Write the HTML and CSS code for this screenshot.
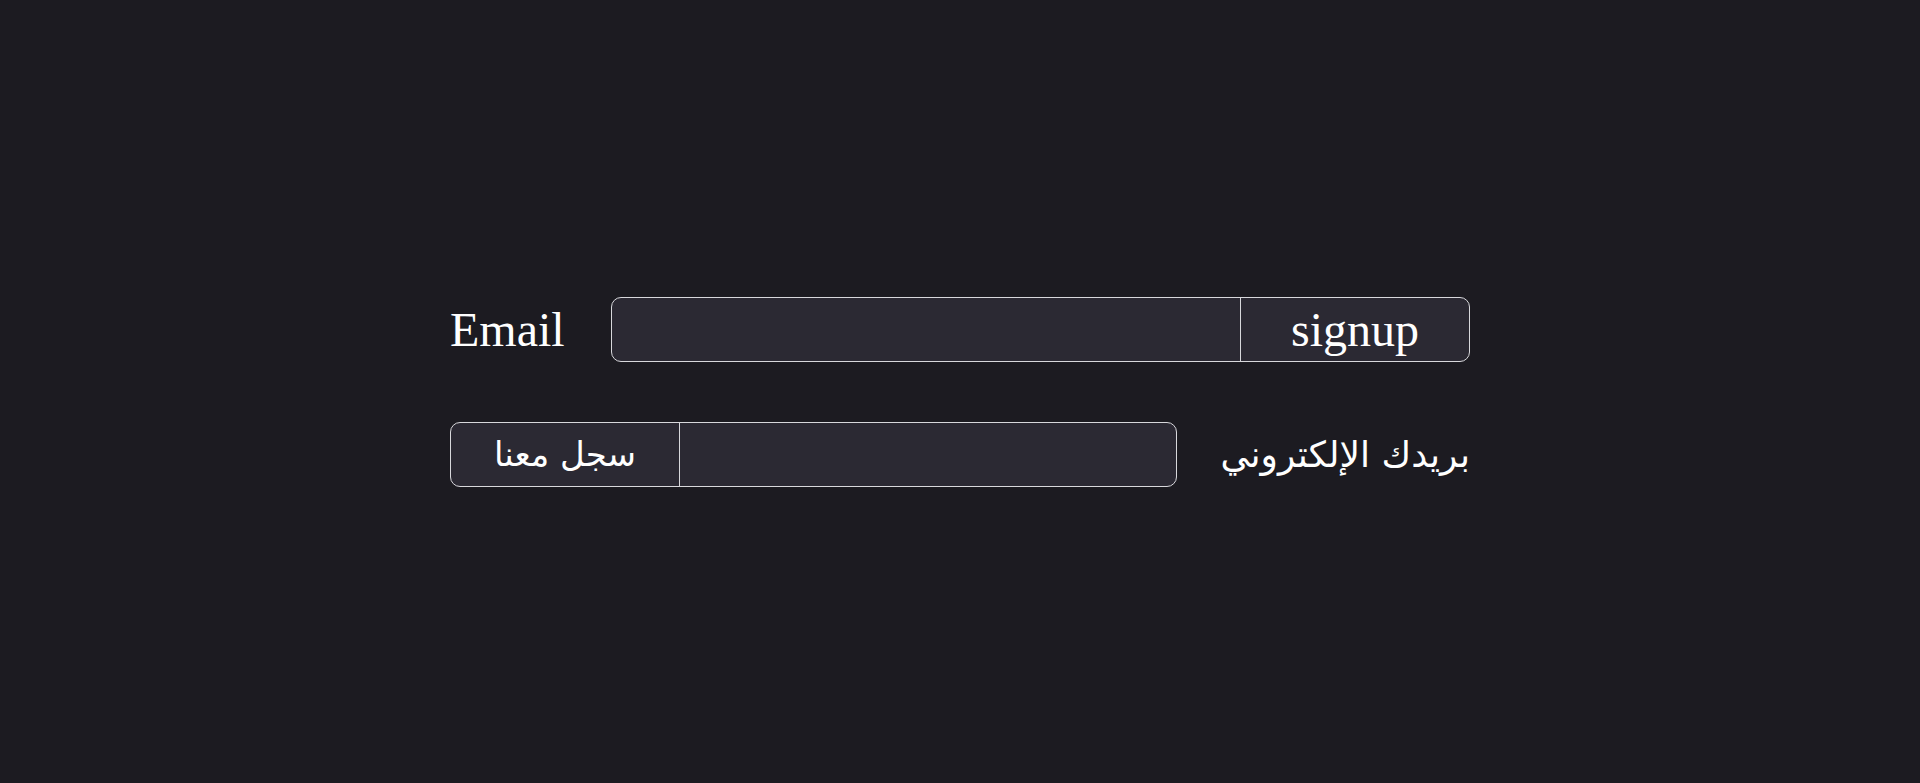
FILE: index.html
```html
<!DOCTYPE html>
<html lang="en">
<head>
<meta charset="utf-8">
<title>Signup</title>
<link rel="stylesheet" href="styles.css">
</head>
<body>
<main class="page">
  <form class="row" dir="ltr">
    <label class="label" for="e1">Email</label>
    <div class="group">
      <input class="field" id="e1" type="email">
      <button class="btn" type="button">signup</button>
    </div>
  </form>
  <form class="row row-ar" dir="rtl" lang="ar">
    <label class="label" for="e2">بريدك الإلكتروني</label>
    <div class="group">
      <input class="field" id="e2" type="email">
      <button class="btn" type="button">سجل معنا</button>
    </div>
  </form>
</main>
</body>
</html>
```
FILE: styles.css
```css
html, body {
  margin: 0;
  padding: 0;
  height: 100%;
  background: #1c1b21;
}
body {
  font-family: "P052", "Palatino Linotype", "Book Antiqua", "URW Palladio L", "Liberation Serif", "DejaVu Sans", serif;
  color: #ffffff;
}
.page {
  height: 100%;
  display: flex;
  flex-direction: column;
  justify-content: center;
  align-items: center;
  gap: 60px;
}
.row {
  width: 1020px;
  display: flex;
  align-items: center;
  gap: 46px;
  margin: 0;
}
.label {
  font-size: 48px;
  white-space: nowrap;
}
.group {
  flex: 1;
  display: flex;
  height: 65px;
  box-sizing: border-box;
  border: 1px solid #d8d8dc;
  border-radius: 10px;
  background: #2b2933;
  overflow: hidden;
}
.field {
  flex: 1;
  min-width: 0;
  border: 0;
  background: transparent;
  color: #fff;
  font: inherit;
  font-size: 32px;
  padding: 0 16px;
  outline: none;
}
.btn {
  width: 229px;
  border: 0;
  border-inline-start: 1px solid #d8d8dc;
  background: transparent;
  color: #fff;
  font: inherit;
  font-size: 48px;
  padding: 0;
  cursor: pointer;
}
.row-ar {
  gap: 44px;
}
.row-ar .label {
  font-family: "DejaVu Sans", sans-serif;
  font-size: 36px;
}
.row-ar .btn {
  font-family: "DejaVu Sans", sans-serif;
  font-size: 34px;
}
```
